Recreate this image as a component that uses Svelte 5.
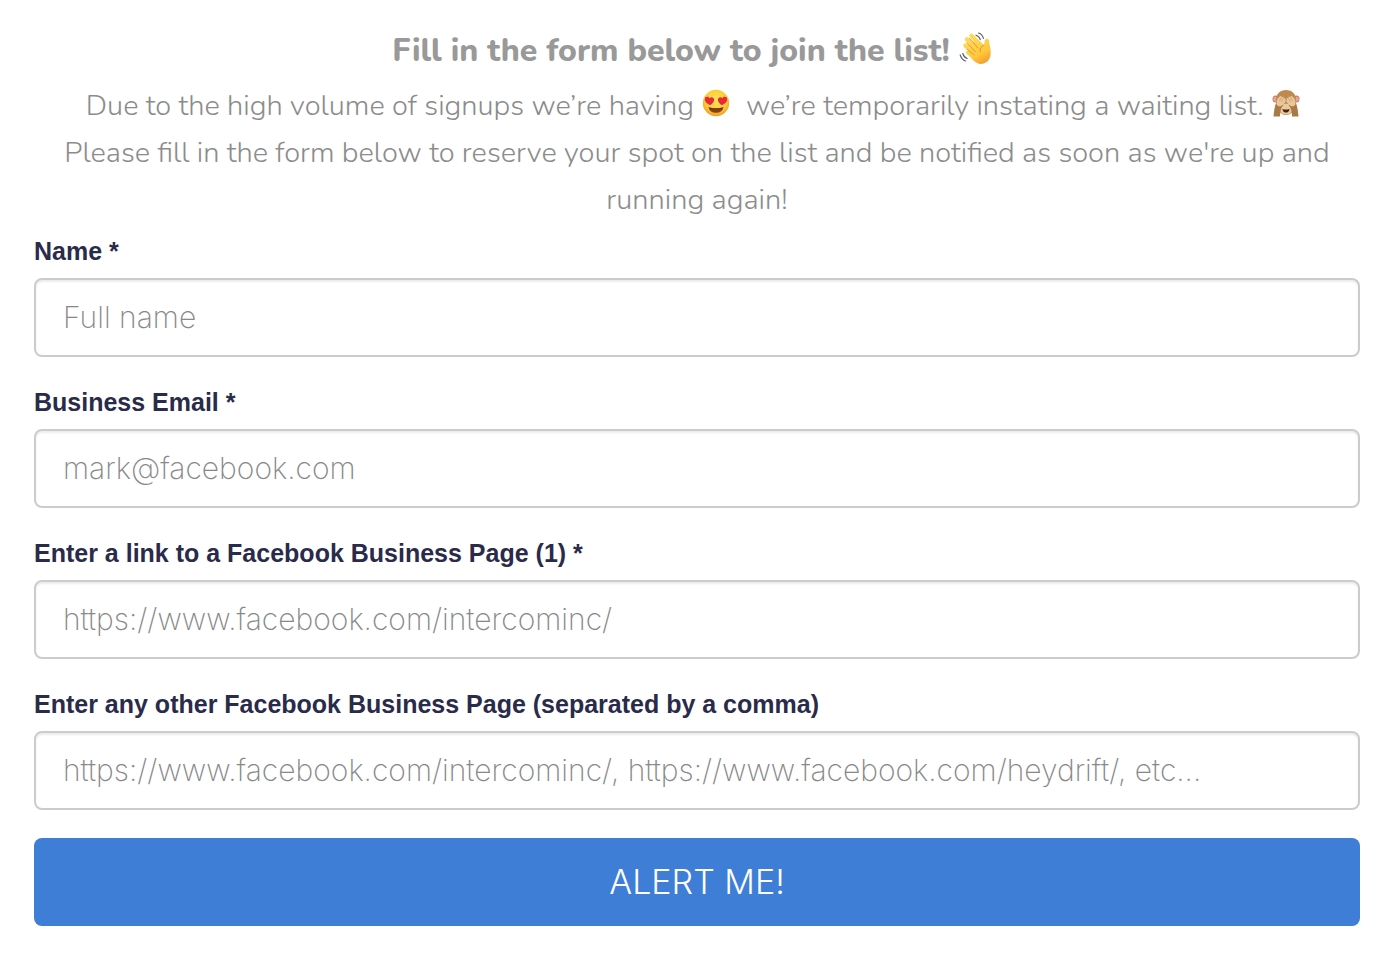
<script lang="ts">
  const fields = [
    { id: "name", label: "Name *", type: "text", placeholder: "Full name", required: true },
    { id: "email", label: "Business Email *", type: "email", placeholder: "mark@facebook.com", required: true },
    {
      id: "page",
      label: "Enter a link to a Facebook Business Page (1) *",
      type: "text",
      placeholder: "https://www.facebook.com/intercominc/",
      required: true,
    },
    {
      id: "other-pages",
      label: "Enter any other Facebook Business Page (separated by a comma)",
      type: "text",
      placeholder: "https://www.facebook.com/intercominc/, https://www.facebook.com/heydrift/, etc...",
      required: false,
    },
  ];

  let values: Record<string, string> = $state({ name: "", email: "", page: "", "other-pages": "" });

  function handleSubmit(event: SubmitEvent) {
    event.preventDefault();
  }
</script>

<main class="waitlist">
  <header class="intro">
    <h1>
      Fill in the form below to join the list!
      <svg class="wave" viewBox="0 0 34 34" role="img" aria-label="waving hand">
        <defs>
          <linearGradient id="hand" gradientUnits="userSpaceOnUse" x1="8" y1="4" x2="26" y2="34">
            <stop offset="0" stop-color="#ffdc62" />
            <stop offset="0.65" stop-color="#ffc93c" />
            <stop offset="1" stop-color="#f0972c" />
          </linearGradient>
        </defs>
        <g stroke="url(#hand)" stroke-linecap="round" fill="none">
          <path d="M12.5 5 21 14" stroke-width="4.6" />
          <path d="M8 8.500 18 19" stroke-width="4.6" />
          <path d="M6.500 14.500 16 23" stroke-width="4.4" />
          <path d="M9 21.500 16 27" stroke-width="4" />
        </g>
        <path
          d="M10 13 19 8.500l6 5.500c.6-2 .2-3.800 1.200-5.400 1.300-1.800 4-1 4 1.600 0 3.800 2.200 8.300 1.400 13.300C30.800 29.500 27 33 21.500 33 17 32.500 13.500 29 10.500 25Z"
          fill="url(#hand)"
        />
        <path
          d="m10.500 7.500 8.500 9.500M8 12l8.500 9M8.500 18.500l6.500 5.500M25 14c-3 1.500-4.500 4-4 7"
          fill="none"
          stroke="#d98a20"
          stroke-width="0.8"
          stroke-linecap="round"
        />
        <path
          d="M17 4.200c2 .6 3.700 2.300 4.300 4.500M19.500 2c2.500.7 4.200 2.700 4.900 5.300M3.800 22.500c.6 2.400 2 4 4.300 5M1.200 23.800c.7 2.900 2.600 5 5.300 6.200"
          fill="none"
          stroke="#59636b"
          stroke-width="1.2"
          stroke-linecap="round"
        />
      </svg>&nbsp;
    </h1>
    <p>
      Due to the high volume of signups we’re having
      <svg class="emoji" viewBox="0 0 28 28" role="img" aria-label="smiling face with heart eyes">
        <defs>
          <radialGradient id="face" cx="0.5" cy="0.4" r="0.6">
            <stop offset="0" stop-color="#ffe35a" />
            <stop offset="0.7" stop-color="#fecb35" />
            <stop offset="1" stop-color="#ee9a24" />
          </radialGradient>
        </defs>
        <circle cx="14" cy="14" r="13.2" fill="url(#face)" />
        <path d="M6.500 18c4.800 1.600 10.200 1.600 15 0-.4 3.700-3.500 5.800-7.500 5.800S6.900 21.700 6.500 18Z" fill="#85440f" />
        <path d="M7.500 18.700c4.300 1.200 8.700 1.200 13 0-.3 1-.9 1.500-1.800 1.500H9.300c-.9 0-1.500-.5-1.800-1.500Z" fill="#6a2e0c" />
        <path
          d="M8 16.300C4.500 14.300 2.300 12.200 2.800 9.700 3.300 7.500 6.300 7.100 7.500 9.200c1.700-1.800 4.800-.8 4.600 1.700-.1 2.100-1.800 3.700-4.100 5.400Z"
          fill="#e9283a"
        />
        <path
          d="M20 16.300c3.500-2 5.700-4.100 5.200-6.600-.5-2.200-3.500-2.600-4.700-.5-1.700-1.800-4.800-.8-4.600 1.700.1 2.100 1.800 3.700 4.100 5.400Z"
          fill="#e9283a"
        />
      </svg>&nbsp; we’re temporarily instating a waiting list.
      <svg class="emoji" viewBox="0 0 28 28" role="img" aria-label="see-no-evil monkey">
        <ellipse cx="3.500" cy="10" rx="3" ry="3.600" fill="#b98750" />
        <ellipse cx="24.500" cy="10" rx="3" ry="3.600" fill="#b98750" />
        <ellipse cx="3.200" cy="10" rx="2" ry="2.600" fill="#f59aa6" />
        <ellipse cx="24.800" cy="10" rx="2" ry="2.600" fill="#f59aa6" />
        <path d="M14 1C8 1 4 5 4 11c0 8 3 15 10 15s10-7 10-15C24 5 20 1 14 1Z" fill="#bd8b50" />
        <path d="M8.500 17c2-3 9-3 11 0 2 5-1 8.500-5.500 8.500S6.500 22 8.500 17Z" fill="#eccb9a" />
        <path d="M10.500 20c2.200.8 4.800.8 7 0-.3 2.600-1.700 3.600-3.500 3.600s-3.200-1-3.500-3.600Z" fill="#4b2418" />
        <path d="M1.500 27.500C2 22.500 2.500 17 4.500 13l7 3C8.500 19 8 23.500 8 27.500Z" fill="#a87a46" />
        <path d="M26.500 27.500c-.5-5-1-10.500-3-14.500l-7 3c3 3 3.500 7.500 3.500 11.500Z" fill="#a87a46" />
        <path
          d="M4.500 14.500c-.3-3 1.200-5.500 3.500-7.200 1.200-.8 2 .2 1.400 1.200 1.400-1.400 2.800-.6 2 .8 1.500-1 2.500.1 1.700 1.500.9.200.8 1.100.3 2-1.200 2.200-2.700 3.700-5 4.400-2 .5-3.700-.5-3.900-2.700Z"
          fill="#eac69a"
        />
        <path
          d="M23.500 14.500c.3-3-1.200-5.500-3.500-7.200-1.200-.8-2 .2-1.400 1.200-1.400-1.400-2.800-.6-2 .8-1.500-1-2.500.1-1.700 1.500-.9.200-.8 1.100-.3 2 1.200 2.200 2.700 3.700 5 4.400 2 .5 3.700-.5 3.900-2.700Z"
          fill="#eac69a"
        />
        <path
          d="M9.400 8.500 7.500 12m3.900-2.700L9.500 13m9.100-4.500 1.900 3.500m-3.900-2.700 1.900 3.700"
          fill="none"
          stroke="#c4925c"
          stroke-width="0.6"
        />
      </svg>&nbsp;<br />
      Please fill in the form below to reserve your spot on the list and be notified as soon as we're up and
      running again!
    </p>
  </header>

  <form onsubmit={handleSubmit}>
    {#each fields as field (field.id)}
      <div class="field">
        <label for={field.id}>{field.label}</label>
        <input
          id={field.id}
          type={field.type}
          placeholder={field.placeholder}
          required={field.required}
          bind:value={values[field.id]}
        />
      </div>
    {/each}
    <button type="submit">ALERT ME!</button>
  </form>
</main>

<style>
  :global(body) {
    background: #fff;
  }
  .waitlist {
    padding: 20px 40px 34px 34px;
    font-family: "Liberation Sans", Arial, sans-serif;
  }
  .intro {
    color: #999;
    font-family: Nunito, "Open Sans", sans-serif;
    text-align: center;
  }
  h1 {
    margin: 0;
    font-size: 32px;
    font-weight: 800;
    line-height: 62px;
  }
  p {
    margin: 0;
    color: #8c8c8c;
    font-size: 29px;
    font-weight: 300;
    line-height: 47px;
  }
  .wave {
    width: 34px;
    height: 34px;
    vertical-align: -4px;
  }
  .emoji {
    width: 28px;
    height: 28px;
    margin: 0 1px;
    vertical-align: -2px;
  }
  form {
    display: flex;
    flex-direction: column;
    gap: 24px;
    margin-top: 7px;
  }
  .field {
    display: flex;
    flex-direction: column;
    gap: 6px;
  }
  label {
    color: #2a2b4a;
    font-size: 25px;
    font-weight: 700;
    line-height: 42px;
  }
  input {
    box-sizing: border-box;
    width: 100%;
    height: 79px;
    padding: 0 27px 2px;
    border: 2px solid #ccc;
    border-radius: 8px;
    background: #fff;
    box-shadow: inset 0 2px 2px rgba(0, 0, 0, 0.08);
    color: #555;
    font-family: Inter, sans-serif;
    font-size: 30px;
    font-weight: 200;
  }
  input::placeholder {
    color: #888;
    opacity: 1;
  }
  button {
    height: 88px;
    margin-top: 4px;
    padding: 0 0 2px;
    border: 0;
    border-radius: 8px;
    background: #3f7ed6;
    color: #fff;
    font-family: Inter, sans-serif;
    font-size: 34px;
    font-weight: 300;
    cursor: pointer;
  }
  button:hover {
    background: #346fc2;
  }
</style>
